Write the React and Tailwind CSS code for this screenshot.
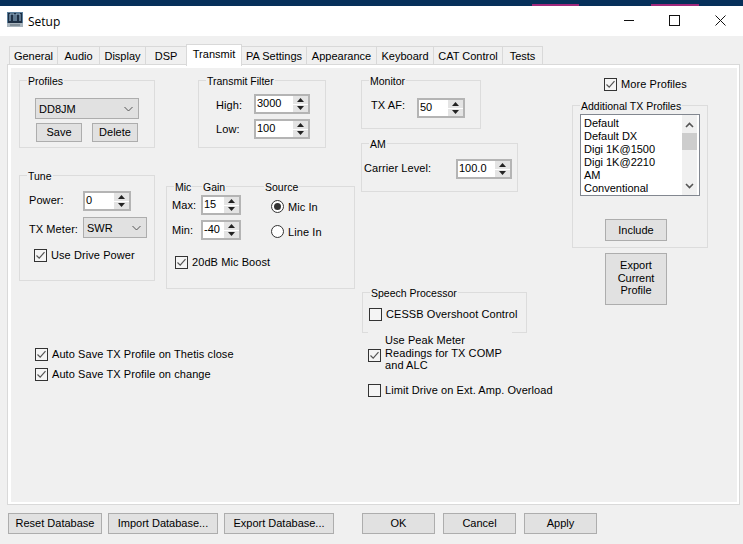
function Group({ box, titles }) {
  return (
    <div className={`absolute border border-[#dcdcdc] ${box}`}>
      {titles.map((t) => (
        <span key={t.text} className={`absolute top-[-7px] h-[14px] bg-[#f0f0f0] px-[1px] text-[10.5px] leading-[14px] text-[#000] whitespace-nowrap ${t.pos}`}>{t.text}</span>
      ))}
    </div>
  );
}

function Label({ pos, children }) {
  return <span className={`absolute h-[14px] text-[11px] leading-[14px] tracking-[0.08px] text-[#000] whitespace-nowrap ${pos}`}>{children}</span>;
}

function Btn({ box, children }) {
  return (
    <div className={`absolute flex items-center justify-center border border-[#adadad] bg-[#e1e1e1] text-center text-[11px] leading-[12.5px] text-[#000] ${box}`}>
      {children}
    </div>
  );
}

function Spin({ box, value }) {
  return (
    <div className={`absolute border-2 border-[#b4b4b4] bg-white ${box}`}>
      <span className="absolute left-[1px] top-0 text-[11px] leading-[14px] text-[#000]">{value}</span>
      <div className="absolute right-0 top-0 flex h-full w-[15px] flex-col gap-[1px] bg-white">
        <div className="flex flex-1 items-center justify-center bg-[#e4e4e4]">
          <svg width="7" height="4" viewBox="0 0 7 4"><path d="M3.5 0L7 4H0z" fill="#222" /></svg>
        </div>
        <div className="flex flex-1 items-center justify-center bg-[#e4e4e4]">
          <svg width="7" height="4" viewBox="0 0 7 4"><path d="M0 0H7L3.5 4z" fill="#222" /></svg>
        </div>
      </div>
    </div>
  );
}

function Combo({ box, value }) {
  return (
    <div className={`absolute border border-[#adadad] bg-[#e1e1e1] ${box}`}>
      <span className="absolute left-[3px] top-[3px] text-[11px] leading-[14px] text-[#000]">{value}</span>
      <svg className="absolute right-[5px] top-[7px]" width="9" height="6" viewBox="0 0 9 6" fill="none"><path d="M0.5 1L4.5 5L8.5 1" stroke="#555" /></svg>
    </div>
  );
}

function Check({ pos, checked }) {
  return (
    <div className={`absolute h-[13px] w-[13px] border border-[#333] bg-[#f4f4f4] ${pos}`}>
      {checked && (
        <svg className="absolute left-0 top-0" width="11" height="11" viewBox="0 0 11 11" fill="none"><path d="M1.5 5.5L4.2 8.2L9.5 2.2" stroke="#555" strokeWidth="1.2" /></svg>
      )}
    </div>
  );
}

function Radio({ pos, checked }) {
  return (
    <div className={`absolute flex h-[13px] w-[13px] items-center justify-center rounded-full border border-[#333] bg-white ${pos}`}>
      {checked && <div className="h-[7px] w-[7px] rounded-full bg-[#333]" />}
    </div>
  );
}

function Tab({ box, children, active }) {
  return (
    <div className={`absolute flex items-center justify-center text-[11px] text-[#000] ${active ? "bg-white border border-b-0 border-[#d9d9d9] z-10" : "bg-[#f0f0f0] border border-b-0 border-[#d9d9d9]"} ${box}`}>
      {children}
    </div>
  );
}

const profiles = [
  ["Default", "top-[2px]"],
  ["Default DX", "top-[15px]"],
  ["Digi 1K@1500", "top-[28px]"],
  ["Digi 1K@2210", "top-[41px]"],
  ["AM", "top-[54px]"],
  ["Conventional", "top-[67px]"],
];

export default function App() {
  return (
    <div className="relative h-[544px] w-[743px] overflow-hidden bg-[#f0f0f0] [font-family:Liberation_Sans,Arial,sans-serif]">
      {/* desktop strip */}
      <div className="absolute left-0 top-0 h-[6px] w-full bg-[#06305a]" />
      <div className="absolute left-[532px] top-[4px] h-[2px] w-[47px] bg-[#a0287c]" />
      <div className="absolute left-[651px] top-[4px] h-[2px] w-[48px] bg-[#a0287c]" />

      {/* title bar */}
      <div className="absolute left-0 top-[6px] h-[30px] w-full bg-white" />
      <svg className="absolute left-[7px] top-[12px]" width="16" height="16" viewBox="0 0 16 16">
        <rect x="0" y="0" width="16" height="14" fill="#5b7f9c" />
        <rect x="1" y="1" width="14" height="10" fill="#1d2f44" />
        <path d="M3 2V9M3 2H7M7 2V9M9 2V9M9 2H13M13 2V9" stroke="#9fc0d8" fill="none" />
        <rect x="0" y="11" width="16" height="4" fill="#a8b4bd" />
        <path d="M3 13H13" stroke="#5c6a75" />
      </svg>
      <span className="absolute left-[28px] top-[13px] [font-family:Open_Sans,sans-serif] text-[12px] leading-[17px] text-[#000]">Setup</span>
      <svg className="absolute left-[624px] top-[15px]" width="11" height="11" viewBox="0 0 11 11" fill="none"><path d="M0 5.5H10" stroke="#111" /></svg>
      <svg className="absolute left-[669px] top-[15px]" width="11" height="11" viewBox="0 0 11 11" fill="none"><rect x="0.5" y="0.5" width="10" height="10" stroke="#111" /></svg>
      <svg className="absolute left-[715px] top-[15px]" width="11" height="11" viewBox="0 0 11 11" fill="none"><path d="M0.5 0.5L10.5 10.5M10.5 0.5L0.5 10.5" stroke="#111" /></svg>

      {/* tabs */}
      <Tab box="left-[9px] top-[46px] h-[19px] w-[49px]">General</Tab>
      <Tab box="left-[57px] top-[46px] h-[19px] w-[43px]">Audio</Tab>
      <Tab box="left-[99px] top-[46px] h-[19px] w-[47px]">Display</Tab>
      <Tab box="left-[145px] top-[46px] h-[19px] w-[42px]">DSP</Tab>
      <Tab box="left-[241px] top-[46px] h-[19px] w-[66px]">PA Settings</Tab>
      <Tab box="left-[306px] top-[46px] h-[19px] w-[71px]">Appearance</Tab>
      <Tab box="left-[376px] top-[46px] h-[19px] w-[58px]">Keyboard</Tab>
      <Tab box="left-[433px] top-[46px] h-[19px] w-[70px]">CAT Control</Tab>
      <Tab box="left-[502px] top-[46px] h-[19px] w-[41px]">Tests</Tab>

      {/* page */}
      <div className="absolute left-[7px] top-[64px] h-[441px] w-[733px] border border-[#d9d9d9] bg-[#f0f0f0]">
        <div className="h-full w-full border-[3px] border-b-2 border-r-2 border-white" />
      </div>
      <Tab box="left-[186px] top-[44px] h-[22px] w-[56px] !border-[#d9d9d9] pb-[3px]" active>Transmit</Tab>

      {/* Profiles */}
      <Group box="left-[19px] top-[80px] h-[68px] w-[136px]" titles={[{ text: "Profiles", pos: "left-[7px]" }]} />
      <Combo box="left-[35px] top-[98px] h-[21px] w-[104px]" value="DD8JM" />
      <Btn box="left-[36px] top-[123px] h-[19px] w-[46px]">Save</Btn>
      <Btn box="left-[92px] top-[123px] h-[19px] w-[46px]">Delete</Btn>

      {/* Transmit Filter */}
      <Group box="left-[198px] top-[80px] h-[68px] w-[128px]" titles={[{ text: "Transmit Filter", pos: "left-[7px]" }]} />
      <Label pos="left-[216px] top-[98px]">High:</Label>
      <Label pos="left-[216px] top-[122px]">Low:</Label>
      <Spin box="left-[254px] top-[94px] h-[20px] w-[56px]" value="3000" />
      <Spin box="left-[254px] top-[119px] h-[20px] w-[56px]" value="100" />

      {/* Monitor */}
      <Group box="left-[361px] top-[80px] h-[49px] w-[120px]" titles={[{ text: "Monitor", pos: "left-[7px]" }]} />
      <Label pos="left-[371px] top-[98px]">TX AF:</Label>
      <Spin box="left-[417px] top-[98px] h-[20px] w-[48px]" value="50" />

      {/* AM */}
      <Group box="left-[361px] top-[143px] h-[49px] w-[157px]" titles={[{ text: "AM", pos: "left-[7px]" }]} />
      <Label pos="left-[364px] top-[161px]">Carrier Level:</Label>
      <Spin box="left-[456px] top-[159px] h-[20px] w-[56px]" value="100.0" />

      {/* Tune */}
      <Group box="left-[19px] top-[175px] h-[106px] w-[136px]" titles={[{ text: "Tune", pos: "left-[7px]" }]} />
      <Label pos="left-[29px] top-[193px]">Power:</Label>
      <Spin box="left-[83px] top-[191px] h-[20px] w-[48px]" value="0" />
      <Label pos="left-[29px] top-[222px]">TX Meter:</Label>
      <Combo box="left-[83px] top-[217px] h-[21px] w-[64px]" value="SWR" />
      <Check pos="left-[34px] top-[249px]" checked />
      <Label pos="left-[51px] top-[248px]">Use Drive Power</Label>

      {/* Mic gain */}
      <Group
        box="left-[166px] top-[186px] h-[103px] w-[189px]"
        titles={[
          { text: "Mic", pos: "left-[7px]" },
          { text: "Gain", pos: "left-[35px]" },
          { text: "Source", pos: "left-[97px]" },
        ]}
      />
      <Label pos="left-[172px] top-[198px]">Max:</Label>
      <Label pos="left-[172px] top-[223px]">Min:</Label>
      <Spin box="left-[201px] top-[195px] h-[20px] w-[40px]" value="15" />
      <Spin box="left-[201px] top-[220px] h-[20px] w-[40px]" value="-40" />
      <Radio pos="left-[271px] top-[200px]" checked />
      <Label pos="left-[288px] top-[200px]">Mic In</Label>
      <Radio pos="left-[271px] top-[225px]" />
      <Label pos="left-[288px] top-[225px]">Line In</Label>
      <Check pos="left-[175px] top-[256px]" checked />
      <Label pos="left-[192px] top-[255px]">20dB Mic Boost</Label>

      {/* Speech Processor */}
      <Group box="left-[362px] top-[292px] h-[41px] w-[165px]" titles={[{ text: "Speech Processor", pos: "left-[7px]" }]} />
      <Check pos="left-[369px] top-[308px]" />
      <Label pos="left-[386px] top-[307px]">CESSB Overshoot Control</Label>

      {/* Peak */}
      <div className="absolute left-[368px] top-[332px] h-[2px] w-[144px] bg-[#f0f0f0]" />
      <Check pos="left-[368px] top-[349px]" checked />
      <Label pos="left-[385px] top-[333px]">Use Peak Meter</Label>
      <Label pos="left-[385px] top-[346px]">Readings for TX COMP</Label>
      <Label pos="left-[385px] top-[358px]">and ALC</Label>
      <Check pos="left-[368px] top-[384px]" />
      <Label pos="left-[385px] top-[383px]">Limit Drive on Ext. Amp. Overload</Label>

      {/* Auto save */}
      <Check pos="left-[35px] top-[348px]" checked />
      <Label pos="left-[52px] top-[347px]">Auto Save TX Profile on Thetis close</Label>
      <Check pos="left-[35px] top-[368px]" checked />
      <Label pos="left-[52px] top-[367px]">Auto Save TX Profile on change</Label>

      {/* More profiles */}
      <Check pos="left-[604px] top-[78px]" checked />
      <Label pos="left-[621px] top-[77px]">More Profiles</Label>
      <Group box="left-[572px] top-[105px] h-[143px] w-[136px]" titles={[{ text: "Additional TX Profiles", pos: "left-[7px]" }]} />
      <div className="absolute left-[580px] top-[114px] h-[82px] w-[120px] overflow-hidden border border-[#828790] bg-white">
        {profiles.map(([p, pos]) => (
          <span key={p} className={`absolute left-[3px] text-[11px] leading-[13px] text-[#000] whitespace-nowrap ${pos}`}>{p}</span>
        ))}
        <div className="absolute right-[2px] top-0 h-full w-[15px] bg-[#f0f0f0]">
          <svg className="absolute left-[3px] top-[7px]" width="9" height="6" viewBox="0 0 9 6" fill="none"><path d="M1 5L4.5 1.5L8 5" stroke="#555" strokeWidth="1.6" /></svg>
          <div className="absolute left-0 top-[18px] h-[17px] w-[15px] bg-[#cdcdcd]" />
          <svg className="absolute left-[3px] top-[68px]" width="9" height="6" viewBox="0 0 9 6" fill="none"><path d="M1 1L4.5 4.5L8 1" stroke="#555" strokeWidth="1.6" /></svg>
        </div>
      </div>
      <Btn box="left-[605px] top-[219px] h-[22px] w-[62px]">Include</Btn>
      <Btn box="left-[605px] top-[253px] h-[52px] w-[62px] pb-[2px]">
        <span>Export<br />Current<br />Profile</span>
      </Btn>

      {/* bottom */}
      <Btn box="left-[8px] top-[513px] h-[21px] w-[94px]">Reset Database</Btn>
      <Btn box="left-[108px] top-[513px] h-[21px] w-[110px]">Import Database...</Btn>
      <Btn box="left-[224px] top-[513px] h-[21px] w-[110px]">Export Database...</Btn>
      <Btn box="left-[362px] top-[513px] h-[21px] w-[73px]">OK</Btn>
      <Btn box="left-[443px] top-[513px] h-[21px] w-[73px]">Cancel</Btn>
      <Btn box="left-[524px] top-[513px] h-[21px] w-[73px]">Apply</Btn>
    </div>
  );
}
